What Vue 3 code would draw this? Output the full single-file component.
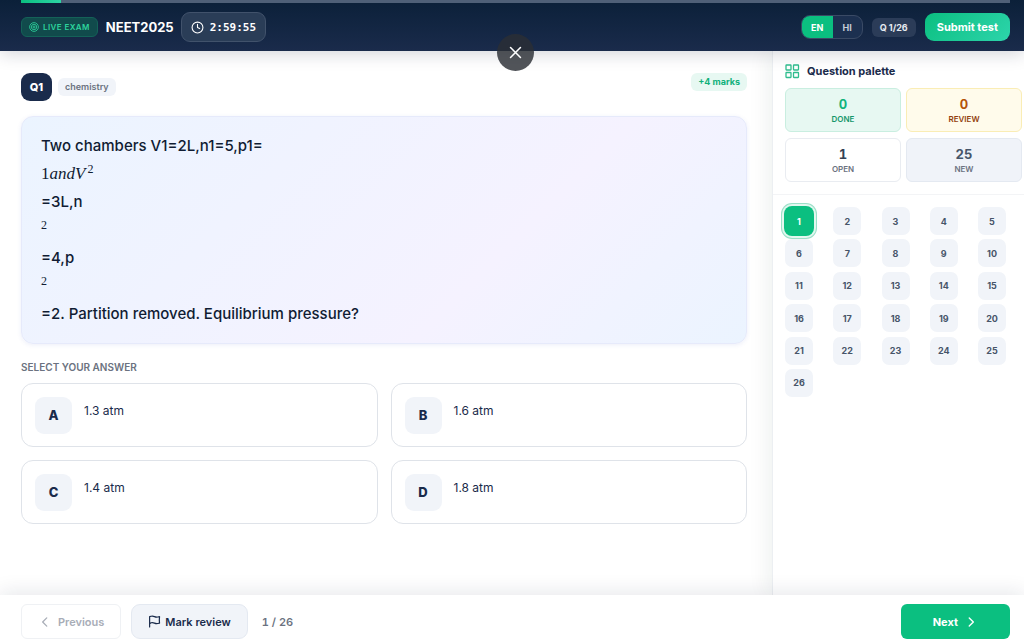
<script setup>
import { ref } from 'vue'

const total = 26
const current = ref(1)
const language = ref('EN')
const languages = ['EN', 'HI']

const options = [
  { key: 'A', text: '1.3 atm' },
  { key: 'B', text: '1.6 atm' },
  { key: 'C', text: '1.4 atm' },
  { key: 'D', text: '1.8 atm' },
]
const selected = ref('')

const stats = [
  { value: 0, label: 'Done', kind: 'done' },
  { value: 0, label: 'Review', kind: 'review' },
  { value: 1, label: 'Open', kind: 'open' },
  { value: 25, label: 'New', kind: 'new' },
]
</script>

<template>
  <div class="exam">
    <header class="topbar">
      <div class="progress"><div class="progress-fill"></div></div>
      <div class="topbar-row">
        <span class="live">
          <svg width="10" height="10" viewBox="0 0 24 24" fill="none" stroke="currentColor" stroke-width="2">
            <circle cx="12" cy="12" r="10.5" />
            <circle cx="12" cy="12" r="6.5" />
            <circle cx="12" cy="12" r="2.5" />
          </svg>
          LIVE EXAM
        </span>
        <h1>NEET2025</h1>
        <span class="timer">
          <svg width="13" height="13" viewBox="0 0 24 24" fill="none" stroke="currentColor" stroke-width="2" stroke-linecap="round" stroke-linejoin="round">
            <circle cx="12" cy="12" r="10" />
            <path d="M12 6v6l4 2" />
          </svg>
          <time>2:59:55</time>
        </span>
        <div class="spacer"></div>
        <div class="lang" role="group" aria-label="Language">
          <button
            v-for="l in languages"
            :key="l"
            type="button"
            :class="{ on: language === l }"
            :aria-pressed="language === l"
            @click="language = l"
          >{{ l }}</button>
        </div>
        <span class="count">Q {{ current }}/{{ total }}</span>
        <button type="button" class="submit">Submit test</button>
      </div>
      <div class="close-layer">
        <button type="button" class="close" aria-label="Close">
          <svg width="17" height="17" viewBox="0 0 24 24" fill="none" stroke="currentColor" stroke-width="2.2" stroke-linecap="round">
            <path d="M5 5l14 14M19 5L5 19" />
          </svg>
        </button>
      </div>
    </header>

    <div class="body">
      <main class="content">
        <div class="meta">
          <span class="qnum">Q{{ current }}</span>
          <span class="subject">chemistry</span>
          <div class="spacer"></div>
          <span class="marks">+4 marks</span>
        </div>

        <section class="question">
          <p>Two chambers V1=2L,n1=5,p1=</p>
          <p class="math">1<i>andV</i><sup>2</sup></p>
          <p>=3L,n</p>
          <p class="math"><sup>2</sup></p>
          <p>=4,p</p>
          <p class="math"><sup>2</sup></p>
          <p>=2. Partition removed. Equilibrium pressure?</p>
        </section>

        <h2 class="prompt">SELECT YOUR ANSWER</h2>
        <div class="options">
          <button
            v-for="o in options"
            :key="o.key"
            type="button"
            class="option"
            :aria-pressed="selected === o.key"
            @click="selected = o.key"
          >
            <span class="letter">{{ o.key }}</span>
            <span class="answer">{{ o.text }}</span>
          </button>
        </div>
      </main>

      <aside class="palette">
        <div class="palette-head">
          <h2>
            <svg width="15" height="15" viewBox="0 0 15 15" fill="none" stroke="#2fbd8e" stroke-width="1.3">
              <rect x="1" y="1" width="5" height="5" rx="0.5" />
              <rect x="8.500" y="1" width="5" height="5" rx="0.5" />
              <rect x="1" y="8.500" width="5" height="5" rx="0.5" />
              <rect x="8.500" y="8.500" width="5" height="5" rx="0.5" />
            </svg>
            Question palette
          </h2>
          <div class="stats">
            <div v-for="s in stats" :key="s.label" class="stat" :class="s.kind">
              <strong>{{ s.value }}</strong>
              <span>{{ s.label }}</span>
            </div>
          </div>
        </div>
        <nav class="numbers" aria-label="Questions">
          <button
            v-for="n in total"
            :key="n"
            type="button"
            :class="{ active: n === current }"
            @click="current = n"
          >{{ n }}</button>
        </nav>
      </aside>
    </div>

    <footer class="bottombar">
      <button type="button" class="nav prev" disabled>
        <svg width="14" height="14" viewBox="0 0 24 24" fill="none" stroke="currentColor" stroke-width="2.2" stroke-linecap="round" stroke-linejoin="round"><path d="M15 19l-7-7 7-7" /></svg>
        Previous
      </button>
      <button type="button" class="nav mark">
        <svg width="13" height="13" viewBox="0 0 24 24" fill="none" stroke="currentColor" stroke-width="2.2" stroke-linecap="round" stroke-linejoin="round"><path d="M3 22V3l2.770-.693a9 9 0 0 1 6.208.682l.108.054a9 9 0 0 0 6.086.710l3.114-.732a48.500 48.500 0 0 0-.005 11.979l-3.110.732a9 9 0 0 1-6.085-.711l-.108-.054a9 9 0 0 0-6.208-.682L3 16" /></svg>
        Mark review
      </button>
      <span class="page">{{ current }} / {{ total }}</span>
      <div class="spacer"></div>
      <button type="button" class="nav next">
        Next
        <svg width="14" height="14" viewBox="0 0 24 24" fill="none" stroke="currentColor" stroke-width="2.4" stroke-linecap="round" stroke-linejoin="round"><path d="M9 5l7 7-7 7" /></svg>
      </button>
    </footer>
  </div>
</template>

<style>
body {
  margin: 0;
  background: #fff;
}
</style>

<style scoped>
.exam {
  min-height: 100vh;
  display: flex;
  flex-direction: column;
  font-family: Inter, "Liberation Sans", sans-serif;
  color: #1a2b4b;
}
.exam *,
.exam {
  box-sizing: border-box;
}
button {
  font: inherit;
  color: inherit;
  margin: 0;
  padding: 0;
  border: 0;
  background: none;
  cursor: pointer;
}
h1,
h2,
p {
  margin: 0;
}
svg {
  flex: none;
}
.spacer {
  flex: 1;
}

.topbar {
  position: relative;
  z-index: 3;
  padding: 0 14px 0 21px;
  background: linear-gradient(180deg, #0b2039, #1a2b4b);
  box-shadow: 0 3px 16px rgba(15, 30, 55, 0.18);
}
.progress {
  height: 3px;
  background: #4f6078;
}
.progress-fill {
  width: 4%;
  height: 3px;
  background: linear-gradient(90deg, #0bbf80, #2dd4a4);
}
.topbar-row {
  display: flex;
  align-items: center;
  height: 48px;
}
.live {
  display: flex;
  align-items: center;
  gap: 4px;
  height: 20px;
  padding: 0 7px;
  margin-right: 8px;
  border: 1px solid #146258;
  border-radius: 6px;
  background: #114b4c;
  color: #2dd49c;
  font-size: 8px;
  font-weight: 600;
  letter-spacing: 0.4px;
  white-space: nowrap;
}
h1 {
  margin-right: 7px;
  color: #fff;
  font-size: 13px;
  font-weight: 700;
  line-height: 20px;
}
.timer {
  display: flex;
  align-items: center;
  gap: 6px;
  height: 30px;
  padding: 0 9px;
  border: 1px solid #41526b;
  border-radius: 9px;
  background: #2a3d57;
  color: #fff;
  font-family: "DejaVu Sans Mono", monospace;
  font-size: 11px;
  font-weight: 700;
}
.lang {
  display: flex;
  height: 24px;
  margin-right: 9px;
  border: 1px solid #3a4a65;
  border-radius: 9px;
  overflow: hidden;
  background: #1c3050;
}
.lang button {
  width: 29px;
  color: #c4ccd8;
  font-size: 9px;
  font-weight: 700;
}
.lang .on {
  width: 31px;
  background: #0bbf80;
  color: #fff;
}
.count {
  padding: 0 8px;
  margin-right: 9px;
  border-radius: 6px;
  background: #2b3c58;
  color: #e6eaf0;
  font-size: 9px;
  font-weight: 700;
  line-height: 19px;
}
.submit {
  height: 28px;
  padding: 0 12px;
  border-radius: 9px;
  background: linear-gradient(135deg, #0bbf80, #2dd4ab);
  color: #fff;
  font-size: 11px;
  font-weight: 700;
}
.close-layer {
  position: absolute;
  top: 34px;
  left: 21px;
  right: 14px;
  display: flex;
  justify-content: center;
  pointer-events: none;
}
.close {
  display: flex;
  align-items: center;
  justify-content: center;
  width: 37px;
  height: 37px;
  border-radius: 50%;
  background: rgba(43, 46, 52, 0.82);
  color: #fff;
  pointer-events: auto;
}

.body {
  flex: 1;
  display: flex;
}
.content {
  flex: 1;
  min-width: 0;
  padding: 22px 25px 22px 21px;
}
.meta {
  display: flex;
  align-items: flex-start;
  margin-bottom: 15px;
}
.qnum {
  width: 31px;
  border-radius: 9px;
  background: #1a2b4b;
  color: #fff;
  font-size: 11px;
  font-weight: 800;
  line-height: 28px;
  text-align: center;
}
.subject {
  align-self: center;
  margin-left: 6px;
  padding: 0 7px;
  border-radius: 6px;
  background: #f1f4f9;
  color: #6b7280;
  font-size: 9px;
  font-weight: 600;
  line-height: 18px;
}
.marks {
  padding: 0 7px;
  border-radius: 6px;
  background: #e7f8f2;
  color: #10b07a;
  font-size: 9px;
  font-weight: 700;
  line-height: 18px;
}
.question {
  padding: 15px 19px;
  border: 1px solid #e6eafb;
  border-radius: 12px;
  background: linear-gradient(135deg, #ebf4ff 0%, #f5f2ff 65%, #ebf4ff 100%);
  box-shadow: 0 1px 4px rgba(70, 90, 200, 0.1);
  color: #101c33;
  font-size: 15px;
  font-weight: 500;
  line-height: 28px;
}
.question p {
  height: 28px;
}
.question .math {
  font-family: "Liberation Serif", serif;
  font-size: 17px;
  font-weight: 400;
}
.math sup {
  margin-left: 2px;
  font-size: 12px;
  line-height: 0;
  vertical-align: 6px;
}
.math sup:first-child {
  margin-left: 0;
}
.prompt {
  margin: 16px 0 8px;
  color: #6b7280;
  font-size: 10px;
  font-weight: 600;
  line-height: 15px;
}
.options {
  display: grid;
  grid-template-columns: 1fr 1fr;
  gap: 13px;
}
.option {
  display: flex;
  align-items: flex-start;
  gap: 12px;
  padding: 13px 13px 12px;
  border: 1px solid #dfe3e9;
  border-radius: 12px;
  background: #fff;
  text-align: left;
}
.letter {
  width: 37px;
  border-radius: 9px;
  background: #f1f4f9;
  font-size: 13px;
  font-weight: 800;
  line-height: 37px;
  text-align: center;
}
.answer {
  padding-top: 4px;
  font-size: 12px;
  line-height: 20px;
}

.palette {
  width: 252px;
  border-left: 1px solid #eceff2;
  box-shadow: -4px 0 20px rgba(15, 50, 40, 0.07);
}
.palette-head {
  padding: 12px 2px 12px 12px;
  border-bottom: 1px solid #f3f4f6;
}
.palette h2 {
  display: flex;
  align-items: center;
  gap: 7px;
  margin-bottom: 9px;
  font-size: 11px;
  font-weight: 700;
  line-height: 16px;
}
.stats {
  display: grid;
  grid-template-columns: 1fr 1fr;
  gap: 6px 5px;
}
.stat {
  display: flex;
  flex-direction: column;
  align-items: center;
  padding: 7px 0 6px;
  border: 1px solid #e9ecf1;
  border-radius: 6px;
  color: #6b7280;
}
.stat strong {
  color: #475569;
  font-size: 13px;
  line-height: 17px;
  font-variant-numeric: tabular-nums;
}
.stat span {
  font-size: 8px;
  font-weight: 600;
  line-height: 12px;
  text-transform: uppercase;
}
.stat.done {
  border-color: #c9eee0;
  background: #e7f8f2;
  color: #15976b;
}
.stat.done strong {
  color: #12b37c;
}
.stat.review {
  border-color: #faedb5;
  background: #fffbeb;
  color: #92400e;
}
.stat.review strong {
  color: #b45309;
}
.stat.open strong {
  color: #334155;
}
.stat.new {
  border-color: #e4e9f1;
  background: #f0f3f9;
}
.numbers {
  display: grid;
  grid-template-columns: repeat(5, 28px);
  justify-content: space-between;
  align-content: space-between;
  min-height: 190px;
  margin: 12px 18px 12px 12px;
}
.numbers button {
  height: 28px;
  border-radius: 7px;
  background: #f1f4f9;
  color: #475569;
  font-size: 9px;
  font-weight: 700;
}
.numbers .active {
  background: #0bbf80;
  color: #fff;
  box-shadow: 0 0 0 1px #0bbf80, 0 0 0 3px #e2f7ef, 0 0 0 4px #9be0c8;
}

.bottombar {
  position: relative;
  z-index: 2;
  display: flex;
  align-items: center;
  padding: 9px 14px 3px 21px;
  background: #fff;
  box-shadow: 0 -3px 20px rgba(15, 30, 55, 0.1);
}
.nav {
  display: flex;
  align-items: center;
  justify-content: center;
  height: 35px;
  border: 1px solid transparent;
  border-radius: 9px;
  font-size: 11px;
  font-weight: 600;
}
.prev {
  gap: 6px;
  padding: 0 16px;
  margin-right: 10px;
  border-color: #eff1f4;
  border-radius: 6px;
  color: #a8adb7;
  cursor: default;
}
.mark {
  gap: 4px;
  padding: 0 16px;
  border-color: #e4e9f1;
  background: #f1f4f9;
}
.page {
  margin-left: 14px;
  color: #6b7280;
  font-size: 11px;
  font-weight: 600;
  font-variant-numeric: tabular-nums;
}
.next {
  gap: 6px;
  padding: 0 31px;
  border-radius: 6px;
  background: #0bbf80;
  color: #fff;
  font-weight: 700;
}
</style>
